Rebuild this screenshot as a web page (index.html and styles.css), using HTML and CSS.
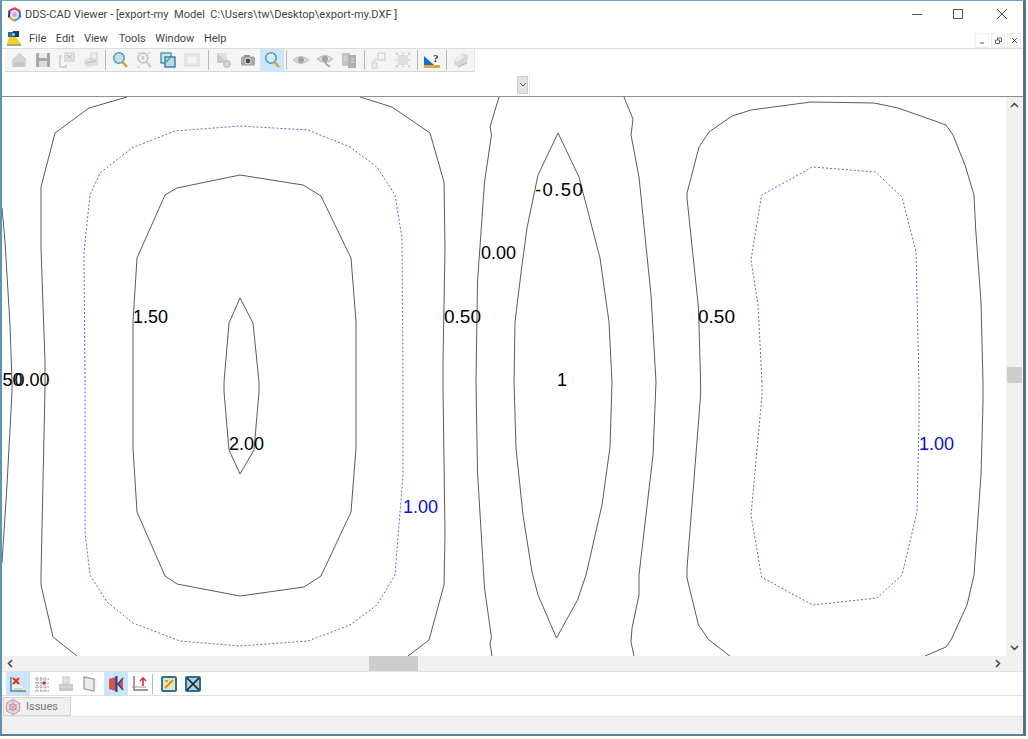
FILE: index.html
```html
<!DOCTYPE html>
<html lang="en">
<head>
    <meta charset="UTF-8">
    <title>DDS-CAD Viewer</title>
    <link rel="stylesheet" href="styles.css">
</head>
<body>

    <div class="window">
        <div class="title-bar">
            <svg class="app-logo" viewBox="0 0 16 16">
                <polygon points="8,0 14.5,3.5 8,8" fill="#d8344a"/>
                <polygon points="14.5,3.5 15,11.5 8,8" fill="#2f6fc4"/>
                <polygon points="15,11.5 8,16 8,8" fill="#27a6c9"/>
                <polygon points="8,16 1,11.5 8,8" fill="#e9a02c"/>
                <polygon points="1,11.5 1.5,3.5 8,8" fill="#2b2f77"/>
                <polygon points="1.5,3.5 8,0 8,8" fill="#c63a94"/>
                <circle cx="8" cy="8" r="4.8" fill="#f3e6f0"/>
                <circle cx="8" cy="8" r="2.6" fill="#c9a8c8"/>
            </svg>
            <span class="title-text">DDS-CAD Viewer - [export-my  Model  C:\Users\tw\Desktop\export-my.DXF ]</span>
            <div class="window-controls">
                <svg viewBox="0 0 10 10"><path d="M0 5.5H10" stroke="#555" fill="none"/></svg>
                <svg viewBox="0 0 10 10"><rect x="0.5" y="0.5" width="9" height="9" stroke="#555" fill="none"/></svg>
                <svg viewBox="0 0 10 10"><path d="M0 0L10 10M10 0L0 10" stroke="#555" fill="none"/></svg>
            </div>
        </div>

        <div class="menu-bar">
            <svg class="menu-icon" viewBox="0 0 14 15">
                <rect x="1" y="1" width="5" height="5" fill="#2b6f9e"/>
                <rect x="6" y="0" width="6" height="6" fill="#1c3f5e"/>
                <rect x="5" y="2" width="3" height="3" fill="#6fb7d8"/>
                <polygon points="0,13 2,6 9,6 14,13" fill="#f4cf2e"/>
                <path d="M0 14H14" stroke="#7a8a3a" stroke-width="1.4"/>
            </svg>
            <ul class="menu-list">
                <li>File</li>
                <li>Edit</li>
                <li>View</li>
                <li class="menu-tools">Tools</li>
                <li>Window</li>
                <li>Help</li>
            </ul>
            <div class="mdi-controls">
                <span class="mdi-button"><svg viewBox="0 0 7 7"><path d="M1 6H5" stroke="#555" fill="none"/></svg></span>
                <span class="mdi-button"><svg viewBox="0 0 7 7"><path d="M0.5 3H4.5V6.5H0.5ZM2.5 3V1H6.5V4.5H4.5" stroke="#666" fill="none"/></svg></span>
                <span class="mdi-button"><svg viewBox="0 0 7 7"><path d="M1 1L6 6M6 1L1 6" stroke="#555" fill="none"/></svg></span>
            </div>
        </div>

        <div class="toolbar-row">
            <div class="toolbar">
                <span class="tool"><svg viewBox="0 0 18 18"><polygon points="2,9 9,2 16,9 16,16 2,16" fill="#d4d4d4"/><path d="M9 2L16 9" stroke="#bbb"/><rect x="4" y="11" width="10" height="5" fill="#c4c4c4"/></svg></span>
                <span class="tool"><svg viewBox="0 0 18 18"><rect x="2" y="2" width="14" height="14" fill="#a8a8a8"/><rect x="5" y="2" width="8" height="5" fill="#e8e8e8"/><rect x="5" y="10" width="8" height="6" fill="#dadada"/></svg></span>
                <span class="tool"><svg viewBox="0 0 18 18"><path d="M4 5H2V16H8V14" stroke="#c8c8c8" fill="none" stroke-width="1.4"/><rect x="7" y="2" width="9" height="8" fill="#e8e8e8" stroke="#c8c8c8"/><path d="M9 4L14 8M14 4L9 8" stroke="#bbb"/></svg></span>
                <span class="tool"><svg viewBox="0 0 18 18"><polygon points="2,9 12,5 16,7 16,14 5,16 2,14" fill="#dedede"/><rect x="9" y="2" width="6" height="6" fill="#f0f0f0" stroke="#cfcfcf"/><path d="M4 12L14 10" stroke="#bbb"/></svg></span>
                <span class="tool-sep"></span>
                <span class="tool"><svg viewBox="0 0 18 18"><circle cx="8" cy="7" r="5.3" fill="#bfe0f0" stroke="#5a98ae" stroke-width="1.5"/><path d="M11.5 11L16 16" stroke="#d69a2a" stroke-width="2.4"/></svg></span>
                <span class="tool"><svg viewBox="0 0 18 18"><path d="M2 2H5M13 2H16M2 16H5M13 16H16" stroke="#c8c8c8"/><circle cx="8" cy="7" r="5" fill="#efefef" stroke="#c0c0c0" stroke-width="1.5"/><rect x="7" y="5" width="2" height="4" fill="#c8c8c8"/><path d="M11.5 11L16 16" stroke="#cbcbcb" stroke-width="2.2"/></svg></span>
                <span class="tool"><svg viewBox="0 0 18 18"><rect x="2" y="2" width="10" height="10" fill="#c6e8e6" stroke="#3a9298" stroke-width="1.3"/><rect x="6" y="6" width="10" height="10" fill="#b4dbe4" stroke="#3a6ca2" stroke-width="1.3"/><path d="M7 11L11 7" stroke="#3fa26e" stroke-width="1.2"/></svg></span>
                <span class="tool"><svg viewBox="0 0 18 18"><rect x="2" y="3" width="14" height="12" fill="#ebebeb" stroke="#d6d6d6"/><rect x="4" y="5" width="10" height="8" fill="#f4f4f4" stroke="#dedede"/></svg></span>
                <span class="tool-sep tool-sep-wide"></span>
                <span class="tool"><svg viewBox="0 0 18 18"><polygon points="2,2 12,2 12,12 2,12" fill="#dedede"/><polygon points="2,2 12,12 2,12" fill="#c8c8c8"/><circle cx="12" cy="13" r="3.4" fill="#d6d6d6" stroke="#b8b8b8"/></svg></span>
                <span class="tool"><svg viewBox="0 0 18 18"><rect x="2" y="5.5" width="14" height="9" rx="1.5" fill="#a6a6a6"/><rect x="5" y="4" width="6" height="2" fill="#909090"/><circle cx="9" cy="10" r="3" fill="#4c4c4c" stroke="#eee"/></svg></span>
                <span class="tool tool-active"><svg viewBox="0 0 18 18"><circle cx="8" cy="7" r="5.3" fill="#d4ecf5" stroke="#5a94aa" stroke-width="1.5"/><path d="M11.5 11L16 16" stroke="#d2a446" stroke-width="2.4"/></svg></span>
                <span class="tool-sep"></span>
                <span class="tool"><svg viewBox="0 0 18 18"><path d="M1 9Q9 2 17 9Q9 16 1 9Z" fill="#d8d8d8" stroke="#bdbdbd"/><circle cx="9" cy="9" r="3" fill="#a0a0a0"/></svg></span>
                <span class="tool"><svg viewBox="0 0 18 18"><path d="M1 8Q9 1 17 8Q9 15 1 8Z" fill="#d8d8d8" stroke="#b8b8b8"/><circle cx="9" cy="8" r="3" fill="#a0a0a0"/><path d="M9 12L14 16" stroke="#aaa" stroke-width="2"/></svg></span>
                <span class="tool"><svg viewBox="0 0 18 18"><rect x="2" y="2" width="8" height="13" fill="#c4c4c4"/><rect x="8" y="4" width="8" height="13" fill="#b0b0b0"/><path d="M4 6H8M4 9H8M11 8H14M11 11H14" stroke="#dedede"/></svg></span>
                <span class="tool-sep tool-sep-mid"></span>
                <span class="tool"><svg viewBox="0 0 18 18"><rect x="8" y="2" width="7" height="7" fill="#f4f4f4" stroke="#c8c8c8"/><path d="M6 7V10H3V15" stroke="#c8c8c8" fill="none"/><rect x="2" y="12" width="5" height="5" fill="#ececec" stroke="#cfcfcf"/></svg></span>
                <span class="tool"><svg viewBox="0 0 18 18"><rect x="4" y="4" width="10" height="10" fill="#dedede"/><path d="M1 3H4M1 9H4M1 15H4M14 3H17M14 9H17M14 15H17M3 1V4M9 1V4M15 1V4M3 14V17M9 14V17M15 14V17" stroke="#cfcfcf"/></svg></span>
                <span class="tool-sep"></span>
                <span class="tool"><svg viewBox="0 0 18 18"><polygon points="1,14 1,5 11,14" fill="#1d6fc2"/><rect x="1" y="14" width="16" height="3" fill="#e0a83a"/><text x="10" y="11" class="help-mark">?</text></svg></span>
                <span class="tool-sep"></span>
                <span class="tool"><svg viewBox="0 0 18 18"><polygon points="2,8 10,2 16,4 15,12 6,16 2,13" fill="#d8d8d8"/><polygon points="2,8 10,2 12,7 5,11" fill="#ececec"/><path d="M6 16L15 12" stroke="#b4b4b4"/></svg></span>
            </div>
        </div>

        <div class="combo-row">
            <div class="combo-cell">
                <span class="combo-button"><svg viewBox="0 0 8 5"><path d="M1 1L4 4L7 1" stroke="#666" fill="none"/></svg></span>
            </div>
        </div>

        <div class="view-area">
            <svg class="plot" viewBox="2 97 1004 559">
                <!-- 0.50 links -->
                <polyline class="contour" points="127,97 89,108 55,133 41,187 41,248 45,362 45,388 41,575 41,585 53,637 77,656"/>
                <polyline class="contour" points="360,97 392,107 430,133 444,182 445,248 443,362 443,388 445,535 444,585 429,640 408,656"/>
                <polyline class="contour" points="2,208 5,242 10,325 12,382 12,392 7,485 2,563"/>
                <!-- 1.50 -->
                <polygon class="contour" points="133,322 137,258 165,195 177,188 240,175 303,185 321,196 351,258 356,322 356,448 351,512 321,576 304,587 240,596 177,584 165,576 137,512 133,448"/>
                <!-- 2.00 -->
                <polygon class="contour" points="240,298 253,323 259,382 259,392 254,450 240,474 229,450 224,392 224,382 229,323"/>
                <!-- 1.00 -->
                <polygon class="contour-dash" points="85,382 84,252 90,195 100,173 132,148 175,131 240,126 308,130 350,147 377,167 395,195 402,238 403,382 403,475 395,575 377,605 350,625 308,641 240,646 180,641 133,623 107,602 90,575 85,532"/>
                <!-- -0.50 -->
                <polygon class="contour" points="558,133 579,177 600,258 609,322 612,382 610,447 602,505 586,575 577.5,600 556.5,638 538,595 532,572 523,515 516,448 514,382 515,322 522,265 527,228 538,175"/>
                <!-- 0.00 -->
                <polyline class="contour" points="499,97 490,127 491.5,135 484.5,182 477.5,282 476,382 477.5,472 484.5,588 491.5,638 490,643 492,656"/>
                <polyline class="contour" points="624,97 633,119 631,135 639,177 651,295 656,382 653,455 639,575 639,595 632,628 631,642 634,656"/>
                <!-- 0.50 rechts -->
                <polyline class="contour" points="730,656 709,640 698.5,625 687,578 687,568 693,492 700.6,395 700.6,382 698.5,308 687,198 687,193 699,147 709,132 732,116 751,110 811,102 874,103 898,108 926.5,118 946,125 953,135 965,165 974,195 975.6,228 981,302 983,382 983,402 981,475 974,575 967,605 951,640 946,647 925,656"/>
                <polygon class="contour-dash" points="762,382 758,305 751,260 761.6,195 812.5,167 875.6,172 902,197 916,252 919,382 919,425 917,512 902,575 877,598 812.5,605 761.6,577 751,515 762,395"/>

                <text class="plot-label" x="133" y="323">1.50</text>
                <text class="plot-label plot-label-wide" x="444" y="323">0.50</text>
                <text class="plot-label plot-label-neg" x="535" y="196">-0.50</text>
                <text class="plot-label" x="481" y="259">0.00</text>
                <text class="plot-label plot-label-wide" x="698" y="323">0.50</text>
                <text class="plot-label" x="557" y="386">1</text>
                <text class="plot-label" x="229" y="450">2.00</text>
                <text class="plot-label" x="2.5" y="386">50</text>
                <text class="plot-label" x="14.5" y="386">0.00</text>
                <text class="plot-label plot-label-blue" x="403" y="513">1.00</text>
                <text class="plot-label plot-label-blue" x="919" y="450">1.00</text>
            </svg>
            <div class="vscroll">
                <span class="scroll-arrow"><svg viewBox="0 0 9 6"><path d="M1 5L4.5 1.5L8 5" stroke="#444" stroke-width="1.5" fill="none"/></svg></span>
                <div class="vscroll-track"><div class="vscroll-thumb"></div></div>
                <span class="scroll-arrow"><svg viewBox="0 0 9 6"><path d="M1 1L4.5 4.5L8 1" stroke="#444" stroke-width="1.5" fill="none"/></svg></span>
            </div>
        </div>

        <div class="hscroll">
            <span class="scroll-arrow"><svg viewBox="0 0 6 9"><path d="M5 1L1.5 4.5L5 8" stroke="#444" stroke-width="1.5" fill="none"/></svg></span>
            <div class="hscroll-track"><div class="hscroll-thumb"></div></div>
            <span class="scroll-arrow"><svg viewBox="0 0 6 9"><path d="M1 1L4.5 4.5L1 8" stroke="#444" stroke-width="1.5" fill="none"/></svg></span>
        </div>

        <div class="bottom-tools">
            <span class="tool tool-active"><svg viewBox="0 0 18 18"><path d="M2 2V16H17" stroke="#3b8fb5" stroke-width="1.5" fill="#eef6f0"/><path d="M4 3L10 9M10 3L4 9" stroke="#e0341f" stroke-width="2.2"/><path d="M5 14H14" stroke="#e6c58a" stroke-width="1.4"/></svg></span>
            <span class="tool"><svg viewBox="0 0 18 18"><path d="M2 4H16M2 8H16M2 12H16M2 16H16M4 2V17M8 2V17M12 2V17" stroke="#8a8a8a" stroke-dasharray="1.5 1" fill="none"/><circle cx="11" cy="8" r="1.8" fill="#d8324a"/></svg></span>
            <span class="tool"><svg viewBox="0 0 18 18"><rect x="6" y="2" width="6" height="7" fill="#e2e2e2" stroke="#c4c4c4"/><rect x="2" y="9" width="14" height="7" fill="#c8c8c8"/><path d="M2 12H16" stroke="#dedede"/></svg></span>
            <span class="tool"><svg viewBox="0 0 18 18"><polygon points="3,2 13,4 13,16 3,14" fill="#ececec" stroke="#a4a4a4" stroke-width="1.4"/><path d="M15 4V16" stroke="#ccc" stroke-dasharray="1 1"/></svg></span>
            <span class="tool tool-active tool-gap"><svg viewBox="0 0 18 18"><polygon points="2,4 9,2 9,16 2,14" fill="#d6534a"/><polygon points="16,3 10,9 16,15" fill="#d6534a"/><path d="M9.5 1V17" stroke="#1f3f9a" stroke-width="2"/><path d="M16 3L11 9L16 15" stroke="#1f3f9a" stroke-width="1.4" fill="none"/></svg></span>
            <span class="tool"><svg viewBox="0 0 18 18"><path d="M3 1V15H17" stroke="#777" stroke-width="1.4" fill="none"/><path d="M1 12H15" stroke="#9a9a9a" fill="none"/><path d="M12 11V4M9 6L12 3L15 6" stroke="#d8324a" stroke-width="1.6" fill="none"/></svg></span>
            <span class="tool-sep tool-sep-bottom"></span>
            <span class="tool"><svg viewBox="0 0 18 18"><rect x="2" y="2" width="14" height="14" rx="1" fill="#e9e6b0" stroke="#2d6f9e" stroke-width="2"/><path d="M5 13L13 5" stroke="#e28a28" stroke-width="2"/><path d="M5 6H8" stroke="#6cab5a" stroke-width="1.5"/></svg></span>
            <span class="tool"><svg viewBox="0 0 18 18"><rect x="2" y="2" width="14" height="14" rx="1" fill="#a9cfe2" stroke="#2d6f9e" stroke-width="2"/><path d="M3 3L15 15M15 3L3 15" stroke="#222" stroke-width="1.7"/></svg></span>
        </div>

        <div class="tab-row">
            <div class="tab">
                <svg class="tab-icon" viewBox="0 0 16 16">
                    <polygon points="8,0.5 14.5,4 14.5,12 8,15.5 1.5,12 1.5,4" fill="#e6dce2" stroke="#b89aa8"/>
                    <path d="M8 1V15M2 4L14 12M14 4L2 12" stroke="#c69aa8" stroke-width="0.7"/>
                    <circle cx="8" cy="8" r="3.2" fill="none" stroke="#c0788c"/>
                </svg>
                <span>Issues</span>
            </div>
        </div>

        <div class="status-bar"></div>
    </div>

</body>
</html>
```

FILE: styles.css
```css
body {
    margin: 0;
    padding: 0;
    background-color: #fff;
    font-family: Roboto, 'Open Sans', sans-serif;
    color: #333;
    overflow: hidden;
}

.window {
    width: 1021px;
    height: 733px;
    display: flex;
    flex-direction: column;
    border-top: 1px solid #6ba4cf;
    border-left: 2px solid #5f92b8;
    border-right: 3px solid #5c7385;
    border-bottom: 2px solid #5c7f99;
    background-color: #fff;
}

.title-bar {
    height: 27px;
    display: flex;
    align-items: center;
    padding-left: 5px;
}

.app-logo {
    width: 15px;
    height: 15px;
    margin-right: 3px;
}

.title-text {
    font-size: 11.1px;
    white-space: pre;
    color: #444;
}

.window-controls {
    margin-left: auto;
    display: flex;
    align-items: center;
    margin-right: 16px;
    margin-bottom: 2px;
    gap: 34px;
}

.window-controls svg {
    width: 10px;
    height: 10px;
    display: block;
}

.window-controls svg:first-child {
    margin-right: -3px;
}

.menu-bar {
    height: 20px;
    display: flex;
    align-items: center;
    padding-left: 5px;
}

.menu-icon {
    width: 14px;
    height: 15px;
    margin-right: 8px;
}

.menu-list {
    list-style: none;
    margin: 0;
    padding: 0;
    display: flex;
    gap: 9.5px;
    font-size: 11px;
    color: #444;
}

.menu-tools {
    margin-left: 1.5px;
}

.mdi-controls {
    margin-left: auto;
    display: flex;
    gap: 2px;
    margin-right: 2px;
    align-self: flex-end;
}

.mdi-button {
    width: 12px;
    height: 13px;
    border: 1px solid #efefef;
    display: flex;
    align-items: center;
    justify-content: center;
}

.mdi-button svg {
    width: 7px;
    height: 7px;
}

.toolbar-row {
    height: 25px;
    border-top: 1px solid #dcdcdc;
    box-sizing: border-box;
    display: flex;
}

.toolbar {
    margin-left: 3px;
    padding-left: 2px;
    width: 470px;
    box-sizing: border-box;
    height: 23px;
    background-color: #f5f5f5;
    border-right: 1px solid #e4e4e4;
    border-bottom: 1px solid #d8d8d8;
    display: flex;
    align-items: center;
}

.tool {
    width: 24px;
    height: 23px;
    flex-shrink: 0;
    display: flex;
    align-items: center;
    justify-content: center;
}

.tool svg {
    width: 18px;
    height: 18px;
}

.tool-active {
    background-color: #cde6f7;
}

.help-mark {
    font-family: 'Liberation Serif', serif;
    font-size: 11px;
    font-weight: bold;
    fill: #14307a;
}

.tool-sep {
    width: 1px;
    height: 20px;
    margin: 0 2px;
    background-color: #b8b8b8;
    flex-shrink: 0;
}

.tool-sep-wide {
    margin: 0 3px 0 4px;
}

.tool-sep-mid {
    margin: 0 2px 0 3px;
}

.tool-sep-bottom {
    margin: 0 4px 0 0;
}

.combo-row {
    height: 23px;
    flex-shrink: 0;
    display: flex;
}

.combo-cell {
    width: 528px;
    box-sizing: border-box;
    border-right: 1px solid #ececec;
    display: flex;
    justify-content: flex-end;
    align-items: center;
    padding-right: 1px;
}

.combo-button {
    width: 9px;
    height: 16px;
    background-color: #e2e2e2;
    border: 1px solid #cfcfcf;
    display: flex;
    align-items: center;
    justify-content: center;
}

.combo-button svg {
    width: 8px;
    height: 5px;
}

.view-area {
    height: 559px;
    flex-shrink: 0;
    border-top: 1px solid #8f8f8f;
    display: flex;
}

.plot {
    width: 1004px;
    height: 559px;
    display: block;
    flex-shrink: 0;
}

.contour,
.contour-dash {
    fill: none;
    stroke-width: 1;
}

.contour {
    stroke: #5a5a5a;
}

.contour-dash {
    stroke: #6262e2;
    stroke-dasharray: 2 2;
}

.plot-label {
    font-family: 'Liberation Sans', Arial, sans-serif;
    font-size: 18px;
    fill: #000;
}

.plot-label-wide {
    font-size: 19px;
}

.plot-label-neg {
    font-size: 18.5px;
    letter-spacing: 1.4px;
}

.plot-label-blue {
    fill: #0c0cd0;
}

.vscroll {
    width: 17px;
    height: 559px;
    background-color: #f1f1f1;
    display: flex;
    flex-direction: column;
}

.vscroll-track {
    flex: 1 1 0;
}

.vscroll-thumb {
    margin: 254px 1px 0;
    height: 16px;
    background-color: #cdcdcd;
}

.scroll-arrow {
    flex-shrink: 0;
    width: 16px;
    height: 16px;
    display: flex;
    align-items: center;
    justify-content: center;
    align-self: center;
}

.vscroll .scroll-arrow svg {
    width: 9px;
    height: 6px;
}

.hscroll .scroll-arrow svg {
    width: 6px;
    height: 9px;
}

.hscroll {
    height: 16px;
    flex-shrink: 0;
    background-color: #f1f1f1;
    display: flex;
    padding-right: 17px;
    border-bottom: 1px solid #e2e2e2;
    box-sizing: border-box;
}

.hscroll-track {
    flex-grow: 1;
}

.hscroll-thumb {
    margin-left: 351px;
    width: 49px;
    height: 15px;
    background-color: #cdcdcd;
}

.bottom-tools {
    height: 23px;
    flex-shrink: 0;
    padding-left: 4px;
    display: flex;
    align-items: center;
}

.tool-gap {
    margin-left: 2px;
}

.tab-row {
    height: 21px;
    flex-shrink: 0;
    box-sizing: border-box;
    border-top: 1px solid #dedede;
    padding: 1px 0 0 1px;
    display: flex;
}

.tab {
    width: 68px;
    height: 19px;
    box-sizing: border-box;
    background-color: #f0f0f0;
    border: 1px solid #d0d0d0;
    display: flex;
    align-items: center;
    padding-left: 1px;
    font-size: 11px;
    color: #777;
}

.tab-icon {
    width: 16px;
    height: 16px;
    margin-right: 5px;
}

.status-bar {
    flex-grow: 1;
    background-color: #f0f0f0;
    border-top: 1px solid #e6e6e6;
}
```
